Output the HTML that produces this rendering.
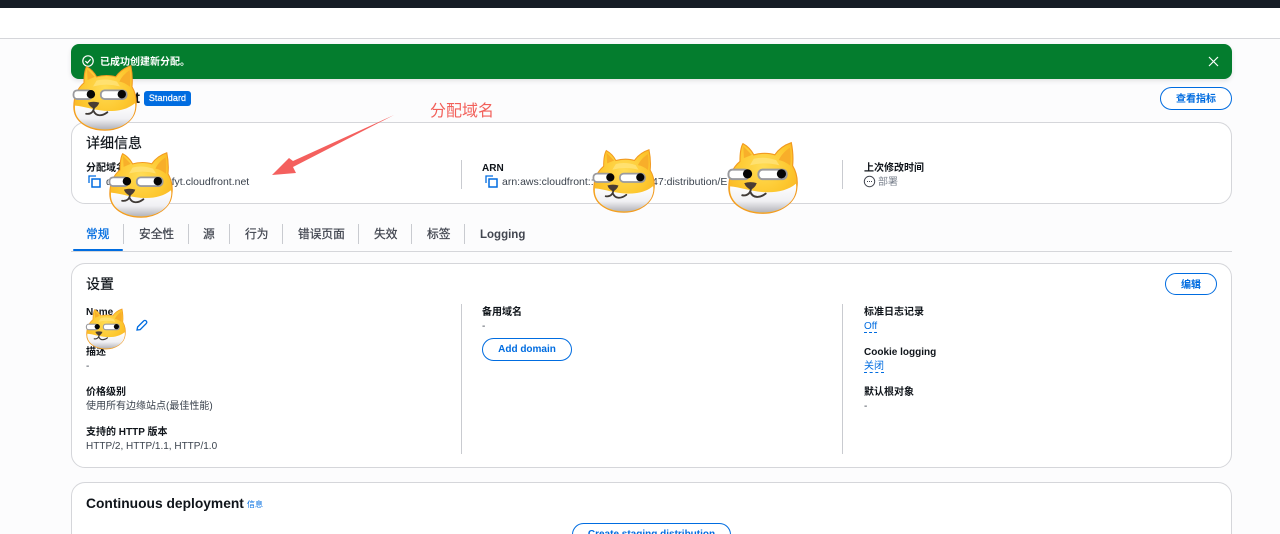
<!DOCTYPE html>
<html lang="zh">
<head>
<meta charset="utf-8">
<style>
html,body{margin:0;padding:0;width:1280px;height:534px;overflow:hidden;background:#fcfcfd;}
body{position:relative;font-family:"Liberation Sans","Noto Sans CJK SC",sans-serif;color:#16191f;font-size:10px;}
.a{position:absolute;white-space:nowrap;line-height:14px;}
.l{font-weight:700;color:#0f141a;}
.v{color:#3a424d;}
.card{position:absolute;left:71px;width:1159px;background:#fff;border:1px solid #d5d6da;border-radius:14px;box-sizing:content-box;}
.h{font-size:14px;line-height:20px;color:#0f141a;-webkit-text-stroke:.2px #0f141a;}
.btn{position:absolute;box-sizing:border-box;border:1.5px solid #006ce0;border-radius:12px;color:#006ce0;font-weight:700;text-align:center;background:#fff;font-size:10px;overflow:hidden;}
.sep{position:absolute;width:1px;background:#c9cbd0;}
.tab{position:absolute;top:227px;font-size:11.7px;line-height:15px;color:#424650;white-space:nowrap;-webkit-text-stroke:.25px #424650;}
.doge{position:absolute;}
.link{color:#006ce0;border-bottom:1px dashed #006ce0;line-height:11px;}
</style>
</head>
<body>
<svg width="0" height="0" style="position:absolute">
<defs>
<radialGradient id="y" cx=".5" cy=".34" r=".62"><stop offset="0" stop-color="#ffdc55"/><stop offset=".65" stop-color="#fdc72e"/><stop offset="1" stop-color="#fab524"/></radialGradient>
<linearGradient id="w" x1="0" y1="0" x2="0" y2="1"><stop offset="0" stop-color="#ffffff"/><stop offset=".6" stop-color="#f0f0f3"/><stop offset="1" stop-color="#b4b4ba"/></linearGradient>
<symbol id="doge" viewBox="50 30 220 225">
<path d="M90 92C90 68 93 48 99 38C112 45 124 57 132 72C152 66 178 66 196 72C208 54 228 41 246 35C250 55 252 85 250 105C262 125 266 150 263 172C260 220 210 250 160 250C105 250 56 222 56 172C56 138 68 110 90 92Z" fill="url(#y)" stroke="#f29a20" stroke-width="3.5"/>
<path d="M100 46L126 72L102 82Z" fill="#f8af2a"/>
<path d="M208 88C216 70 230 58 242 50C245 68 245 88 243 105C232 96 220 90 208 88Z" fill="#f8ae2a"/>
<path d="M132 84Q165 76 200 88L210 104Q165 92 120 104Z" fill="#ffe680" opacity=".7"/>
<path d="M60 168C92 170 130 186 175 186C210 186 238 178 260 160C263 174 259 190 253 202C236 231 200 247 160 247C112 247 63 224 60 180Z" fill="url(#w)"/>
<rect x="55" y="117" width="62" height="29" rx="12" fill="#fff" stroke="#9a9a9e" stroke-width="6"/>
<rect x="146" y="117" width="86" height="29" rx="13" fill="#fff" stroke="#9a9a9e" stroke-width="6"/>
<circle cx="113" cy="130" r="14" fill="#050505"/>
<circle cx="216" cy="130" r="14" fill="#050505"/>
<path d="M103 158Q122 152 141 158Q136 172 123 178Q108 172 103 158Z" fill="#4a3c34"/>
<path d="M123 172C124 186 114 198 97 195M122 186C130 204 150 204 168 190" fill="none" stroke="#3f3a36" stroke-width="6" stroke-linecap="round"/>
</symbol>
</defs>
</svg>

<div style="position:absolute;left:0;top:0;width:1280px;height:8px;background:#161d26"></div>
<div style="position:absolute;left:0;top:8px;width:1280px;height:30px;background:#fff;border-bottom:1px solid #d5d6da"></div>

<!-- flash -->
<div style="position:absolute;left:71px;top:44px;width:1161px;height:35px;background:#047d2e;border-radius:8px;box-shadow:0 2px 5px rgba(0,0,0,.1)"></div>
<svg class="a" style="left:82px;top:55px" width="12" height="12" viewBox="0 0 12 12"><circle cx="6" cy="6" r="5.2" fill="none" stroke="#fff" stroke-width="1.2"/><path d="M3.4 6.1L5.3 8L8.6 4.3" fill="none" stroke="#fff" stroke-width="1.2"/></svg>
<div class="a" style="left:100px;top:56px;color:#fff;font-weight:700">已成功创建新分配。</div>
<svg class="a" style="left:1208px;top:56px" width="11" height="11" viewBox="0 0 11 11"><path d="M1 1L10 10M10 1L1 10" stroke="#fff" stroke-width="1.2" fill="none"/></svg>

<!-- title -->
<div class="a" style="right:1140px;top:89px;font-size:16px;line-height:20px;font-weight:700;color:#0f141a">E3ABCt</div>
<div class="a" style="left:144px;top:91px;width:47px;height:15px;background:#006ce0;border-radius:3px;color:#fff;font-size:9px;line-height:15px;text-align:center;-webkit-text-stroke:.2px #fff;letter-spacing:.1px">Standard</div>
<div class="btn" style="left:1160px;top:87px;width:72px;height:23px;line-height:24px">查看指标</div>

<!-- detail card -->
<div class="card" style="top:122px;height:80px"></div>
<div class="a h" style="left:86px;top:133px">详细信息</div>
<div class="a l" style="left:86px;top:162px">分配域名</div>
<svg class="a" style="left:88px;top:175px" width="13" height="13" viewBox="0 0 13 13"><path d="M1 8V1H8" fill="none" stroke="#006ce0" stroke-width="1.3"/><rect x="4" y="4" width="8" height="8" fill="none" stroke="#006ce0" stroke-width="1.5"/></svg>
<div class="a v" style="left:106px;top:175px;font-size:10.5px">d111111abcdefyt.cloudfront.net</div>
<div class="sep" style="left:461px;top:160px;height:29px"></div>
<div class="a l" style="left:482px;top:162px">ARN</div>
<svg class="a" style="left:485px;top:175px" width="13" height="13" viewBox="0 0 13 13"><path d="M1 8V1H8" fill="none" stroke="#006ce0" stroke-width="1.3"/><rect x="4" y="4" width="8" height="8" fill="none" stroke="#006ce0" stroke-width="1.5"/></svg>
<div class="a v" style="left:502px;top:175px;font-size:10.5px">arn:aws:cloudfront::512345678947:distribution/E</div>
<div class="sep" style="left:842px;top:160px;height:29px"></div>
<div class="a l" style="left:864px;top:162px">上次修改时间</div>
<svg class="a" style="left:863px;top:175px" width="13" height="13" viewBox="0 0 13 13"><circle cx="6.5" cy="6.5" r="5.2" fill="none" stroke="#424650" stroke-width="1"/><path d="M4 6.5h1M6 6.5h1M8 6.5h1" stroke="#424650" stroke-width="1"/></svg>
<div class="a" style="left:878px;top:176px;color:#7d8490">部署</div>

<!-- tabs -->
<div class="tab" style="left:86px;color:#006ce0;-webkit-text-stroke-color:#006ce0">常规</div>
<div class="sep" style="left:123px;top:224px;height:20px"></div>
<div class="tab" style="left:139px">安全性</div>
<div class="sep" style="left:188px;top:224px;height:20px"></div>
<div class="tab" style="left:203px">源</div>
<div class="sep" style="left:229px;top:224px;height:20px"></div>
<div class="tab" style="left:245px">行为</div>
<div class="sep" style="left:282px;top:224px;height:20px"></div>
<div class="tab" style="left:298px">错误页面</div>
<div class="sep" style="left:358px;top:224px;height:20px"></div>
<div class="tab" style="left:374px">失效</div>
<div class="sep" style="left:411px;top:224px;height:20px"></div>
<div class="tab" style="left:427px">标签</div>
<div class="sep" style="left:464px;top:224px;height:20px"></div>
<div class="tab" style="left:480px;top:228px;font-size:11.5px;font-weight:700;-webkit-text-stroke:0">Logging</div>
<div style="position:absolute;left:71px;top:250.5px;width:1161px;height:1px;background:#d5d6da"></div>
<div style="position:absolute;left:73px;top:248.5px;width:50px;height:2.5px;background:#006ce0;border-radius:2px"></div>

<!-- settings card -->
<div class="card" style="top:263px;height:203px"></div>
<div class="a h" style="left:86px;top:274px">设置</div>
<div class="btn" style="left:1165px;top:273px;width:52px;height:22px;line-height:23px">编辑</div>
<div class="a l" style="left:86px;top:306px">Name</div>
<svg class="a" style="left:135px;top:319px" width="13" height="13" viewBox="0 0 13 13"><path d="M2 11L2.6 8L8.6 2C9.4 1.2 10.4 1.2 11.2 2C12 2.8 12 3.8 11.2 4.6L5.2 10.6Z" fill="none" stroke="#006ce0" stroke-width="1.3"/></svg>
<div class="a l" style="left:86px;top:346px">描述</div>
<div class="a v" style="left:86px;top:360px">-</div>
<div class="a l" style="left:86px;top:386px">价格级别</div>
<div class="a v" style="left:86px;top:400px">使用所有边缘站点(最佳性能)</div>
<div class="a l" style="left:86px;top:426px">支持的 HTTP 版本</div>
<div class="a v" style="left:86px;top:440px;font-size:10px">HTTP/2, HTTP/1.1, HTTP/1.0</div>

<div class="sep" style="left:461px;top:304px;height:150px"></div>
<div class="a l" style="left:482px;top:306px">备用域名</div>
<div class="a v" style="left:482px;top:320px">-</div>
<div class="btn" style="left:482px;top:338px;width:90px;height:23px;line-height:22px;font-size:10px">Add domain</div>

<div class="sep" style="left:842px;top:304px;height:150px"></div>
<div class="a l" style="left:864px;top:306px">标准日志记录</div>
<div class="a link" style="left:864px;top:321px">Off</div>
<div class="a l" style="left:864px;top:346px">Cookie logging</div>
<div class="a link" style="left:864px;top:361px">关闭</div>
<div class="a l" style="left:864px;top:386px">默认根对象</div>
<div class="a v" style="left:864px;top:400px">-</div>

<!-- continuous deployment -->
<div class="card" style="top:482px;height:80px"></div>
<div class="a" style="left:86px;top:494px;font-size:13.8px;line-height:20px;font-weight:700;color:#0f141a">Continuous deployment</div>
<div class="a" style="left:247px;top:498px;font-size:8px;color:#006ce0">信息</div>
<div class="btn" style="left:572px;top:523px;width:159px;height:23px;line-height:21px;font-size:10px">Create staging distribution</div>

<!-- annotation -->
<div class="a" style="left:430px;top:102px;font-size:16px;line-height:20px;color:#f2605a">分配域名</div>
<svg style="position:absolute;left:0;top:0" width="1280" height="534"><polygon points="394,115 293,161 289,158 272,175 296,173 293,167" fill="#f4605e"/></svg>

<!-- doges -->
<svg class="doge" style="left:72px;top:64px" width="66" height="68"><use href="#doge" width="66" height="68"/></svg>
<svg class="doge" style="left:108px;top:151px" width="66" height="68"><use href="#doge" width="66" height="68"/></svg>
<svg class="doge" style="left:592px;top:148px" width="64" height="66"><use href="#doge" width="64" height="66"/></svg>
<svg class="doge" style="left:726px;top:141px" width="74" height="74"><use href="#doge" width="74" height="74"/></svg>
<svg class="doge" style="left:84px;top:308px" width="44" height="42"><use href="#doge" width="44" height="42"/></svg>
</body>
</html>
